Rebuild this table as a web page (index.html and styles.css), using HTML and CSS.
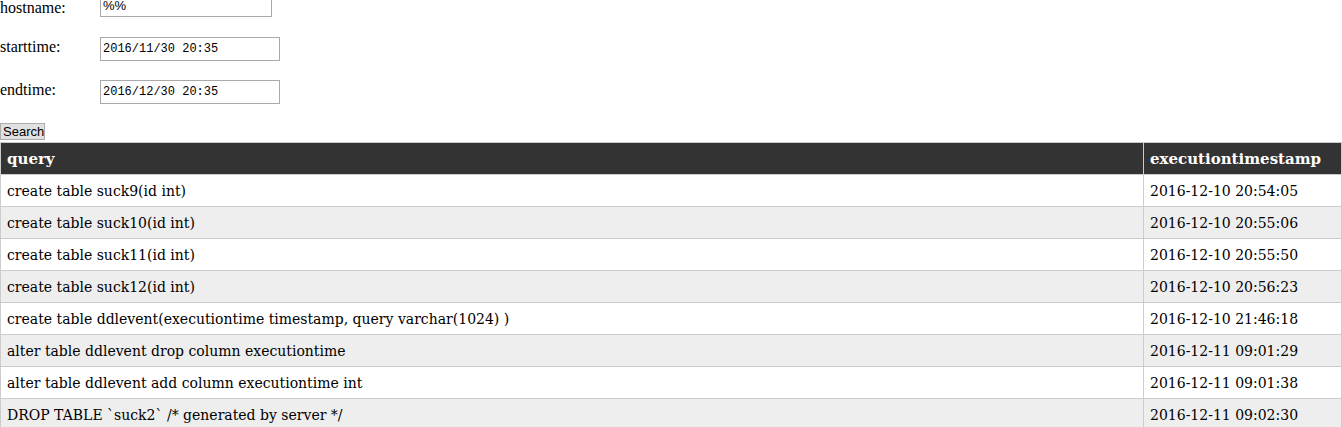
FILE: index.html
```html
<!DOCTYPE html>
<html>
<head>
<meta charset="utf-8">
<link rel="stylesheet" href="styles.css">
</head>
<body>
<form class="search-form">
  <div class="field field-first">
    <label class="field-label">hostname:</label>
    <input class="field-input field-input-host" type="text" value="%%">
  </div>
  <div class="field">
    <label class="field-label">starttime:</label>
    <input class="field-input field-input-date" type="text" value="2016/11/30 20:35">
  </div>
  <div class="field">
    <label class="field-label">endtime:</label>
    <input class="field-input field-input-date" type="text" value="2016/12/30 20:35">
  </div>
  <button class="search-btn" type="button">Search</button>
</form>
<table class="results">
  <thead>
    <tr><th class="col-query">query</th><th class="col-time">executiontimestamp</th></tr>
  </thead>
  <tbody>
    <tr><td>create table suck9(id int)</td><td>2016-12-10 20:54:05</td></tr>
    <tr><td>create table suck10(id int)</td><td>2016-12-10 20:55:06</td></tr>
    <tr><td>create table suck11(id int)</td><td>2016-12-10 20:55:50</td></tr>
    <tr><td>create table suck12(id int)</td><td>2016-12-10 20:56:23</td></tr>
    <tr><td>create table ddlevent(executiontime timestamp, query varchar(1024) )</td><td>2016-12-10 21:46:18</td></tr>
    <tr><td>alter table ddlevent drop column executiontime</td><td>2016-12-11 09:01:29</td></tr>
    <tr><td>alter table ddlevent add column executiontime int</td><td>2016-12-11 09:01:38</td></tr>
    <tr><td>DROP TABLE `suck2` /* generated by server */</td><td>2016-12-11 09:02:30</td></tr>
  </tbody>
</table>
</body>
</html>
```
FILE: styles.css
```css
html, body {
  margin: 0;
  padding: 0;
  background: #fff;
}
body {
  font-family: "Liberation Serif", "Times New Roman", serif;
  font-size: 16px;
  color: #000;
  overflow: hidden;
}
.search-form {
  margin-top: -6px;
  display: flex;
  flex-direction: column;
  align-items: flex-start;
}
.field {
  display: flex;
  align-items: flex-start;
  height: 43px;
}
.field-label {
  width: 100px;
  line-height: 18px;
  padding-top: 1px;
}
.field-first .field-label {
  padding-top: 5px;
}
.field-input {
  box-sizing: border-box;
  margin: 0;
  border: 1px solid #a9a9a9;
  background: #fff;
  color: #000;
  padding: 1px 2px;
  outline: none;
}
.field-input-host {
  width: 172px;
  height: 23px;
  font-family: "Liberation Sans", Arial, sans-serif;
  font-size: 13px;
}
.field-input-date {
  width: 180px;
  height: 24px;
  font-family: "Liberation Mono", "Courier New", monospace;
  font-size: 12px;
}
.search-btn {
  margin: 0 0 2px 0;
  box-sizing: border-box;
  height: 17px;
  width: 45px;
  padding: 0 2px;
  font-family: "Liberation Sans", Arial, sans-serif;
  font-size: 13px;
  line-height: 14px;
  color: #000;
  background: #e1e1e1;
  border: 1px solid #adadad;
  border-radius: 0;
}
.results {
  width: 100%;
  border-collapse: collapse;
  font-family: "DejaVu Serif", Georgia, serif;
  font-size: 14px;
}
.results th, .results td {
  border: 1px solid #ccc;
  text-align: left;
  padding: 0 6px;
  height: 32px;
  box-sizing: border-box;
}
.results th {
  background: #333;
  color: #fff;
  font-weight: bold;
  font-size: 15px;
}
.col-time {
  width: 198px;
}
.results tbody tr:nth-child(even) td {
  background: #eee;
}
```
